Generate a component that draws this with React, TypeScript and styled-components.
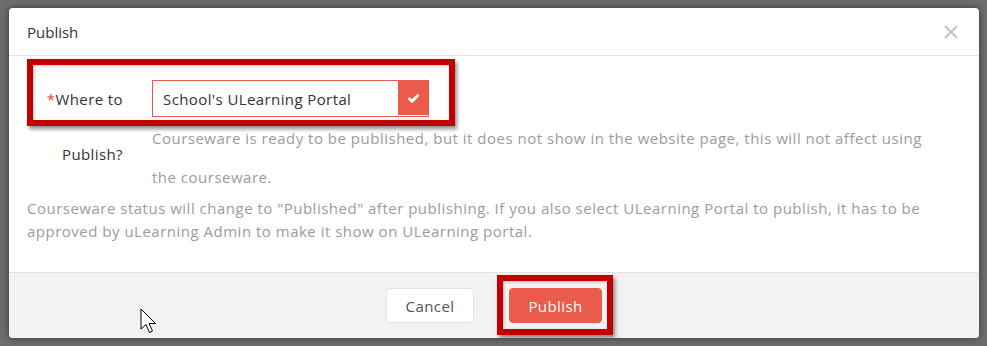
import React from "react";
import styled, { createGlobalStyle } from "styled-components";

const GlobalStyle = createGlobalStyle`
  html, body {
    margin: 0;
    padding: 0;
    background: #6d6d6d;
    font-family: "Open Sans", "Noto Sans", Arial, sans-serif;
  }
  #root {
    width: 987px;
    height: 346px;
    overflow: hidden;
  }
`;

const Page = styled.div`
  position: relative;
  width: 987px;
  height: 346px;
  padding: 8px 0 0 9px;
  box-sizing: border-box;
`;

const Modal = styled.div`
  width: 970px;
  height: 330px;
  background: #fff;
  border-radius: 4px;
  box-shadow: 0 0 7px rgba(0, 0, 0, 0.5);
  display: flex;
  flex-direction: column;
  overflow: hidden;
`;

const Header = styled.div`
  height: 47px;
  flex-shrink: 0;
  display: flex;
  align-items: center;
  justify-content: space-between;
  padding: 0 21px 0 18px;
  border-bottom: 1px solid #e6e6e6;
  font-size: 15px;
  color: #333;
`;

const CloseButton = styled.button`
  border: 0;
  background: none;
  padding: 0;
  width: 14px;
  height: 14px;
  display: flex;
  cursor: pointer;
`;

const Body = styled.div`
  flex: 1;
  padding: 16px 40px 0 18px;
`;

const FormRow = styled.div`
  position: relative;
  display: grid;
  grid-template-columns: 96px 1fr;
  column-gap: 29px;
`;

const Highlight = styled.span<{ $inset: string }>`
  position: absolute;
  inset: ${(p) => p.$inset};
  box-sizing: border-box;
  border: 6px solid #c00000;
  box-shadow: 2px 3px 4px rgba(0, 0, 0, 0.45), inset 1px 1px 3px rgba(0, 0, 0, 0.25);
  pointer-events: none;
`;

const Label = styled.div`
  text-align: right;
  font-size: 15px;
  line-height: 55px;
  letter-spacing: 0.4px;
  color: #333;
`;

const Required = styled.span`
  color: #e8463a;
`;

const Field = styled.div`
  padding-top: 8px;
`;

const Select = styled.div`
  position: relative;
  width: 277px;
  height: 37px;
  box-sizing: border-box;
  border: 1px solid #ea5b4b;
  display: flex;
  align-items: center;
  padding-left: 10px;
  font-size: 15px;
  letter-spacing: 0.4px;
  color: #333;
`;

const CheckBox = styled.span`
  position: absolute;
  top: -1px;
  right: -1px;
  bottom: 1px;
  width: 31px;
  background: #ea5b4b;
  display: flex;
  align-items: center;
  justify-content: center;
`;

const Hint = styled.p<{ $lh: number }>`
  margin: 0;
  font-size: 15px;
  letter-spacing: 0.5px;
  line-height: ${(p) => p.$lh}px;
  color: #9c9c9c;
`;

const Footer = styled.div`
  height: 50px;
  flex-shrink: 0;
  border-top: 1px solid #e2e2e2;
  background: #f2f2f2;
  display: flex;
  justify-content: center;
  align-items: flex-start;
  gap: 35px;
  padding-top: 15px;
`;

const Button = styled.button<{ $primary?: boolean }>`
  height: 35px;
  min-width: ${(p) => (p.$primary ? 93 : 88)}px;
  border-radius: 4px;
  border: 1px solid ${(p) => (p.$primary ? "#ea5b4b" : "#e3e3e3")};
  background: ${(p) => (p.$primary ? "#ea5b4b" : "#fff")};
  color: ${(p) => (p.$primary ? "#fff" : "#555")};
  font-family: inherit;
  font-size: 15px;
  letter-spacing: 0.4px;
  padding: 0 12px;
  cursor: pointer;
`;

const ButtonWrap = styled.span`
  position: relative;
  display: inline-flex;
`;

const Cursor = styled.svg`
  position: absolute;
  left: 140px;
  top: 308px;
`;

export default function App() {
  return (
    <>
      <GlobalStyle />
      <Page>
        <Modal>
          <Header>
            <span>Publish</span>
            <CloseButton aria-label="Close">
              <svg width="14" height="14" viewBox="0 0 14 14">
                <path d="M1 1 L13 13 M13 1 L1 13" stroke="#c4c4c4" strokeWidth="2" />
              </svg>
            </CloseButton>
          </Header>
          <Body>
            <FormRow>
              <Highlight $inset="-13px auto auto 0" style={{ width: 428, height: 67 }} />
              <Label>
                <Required>*</Required>Where to
                <br />
                Publish?
              </Label>
              <Field>
                <Select>
                  School's ULearning Portal
                  <CheckBox>
                    <svg width="13" height="10" viewBox="0 0 13 10">
                      <path d="M1.5 5 L5 8.3 L11.5 1.8" stroke="#fff" strokeWidth="2.8" fill="none" />
                    </svg>
                  </CheckBox>
                </Select>
                <Hint $lh={39} style={{ marginTop: 2 }}>
                  Courseware is ready to be published, but it does not show in the website page, this will not affect using the courseware.
                </Hint>
              </Field>
            </FormRow>
            <Hint $lh={23}>
              Courseware status will change to "Published" after publishing. If you also select ULearning Portal to publish, it has to be approved by uLearning Admin to make it show on ULearning portal.
            </Hint>
          </Body>
          <Footer>
            <Button>Cancel</Button>
            <ButtonWrap>
              <Highlight $inset="-13px -11px -12px -12px" />
              <Button $primary>Publish</Button>
            </ButtonWrap>
          </Footer>
        </Modal>
        <Cursor width="20" height="28" viewBox="0 0 20 28">
          <path
            d="M1 1 L1 21 L6 16.5 L9.5 24.5 L12.5 23 L9 15.5 L15.5 15.5 Z"
            fill="#fff"
            stroke="#000"
            strokeWidth="1"
            strokeLinejoin="miter"
          />
        </Cursor>
      </Page>
    </>
  );
}
